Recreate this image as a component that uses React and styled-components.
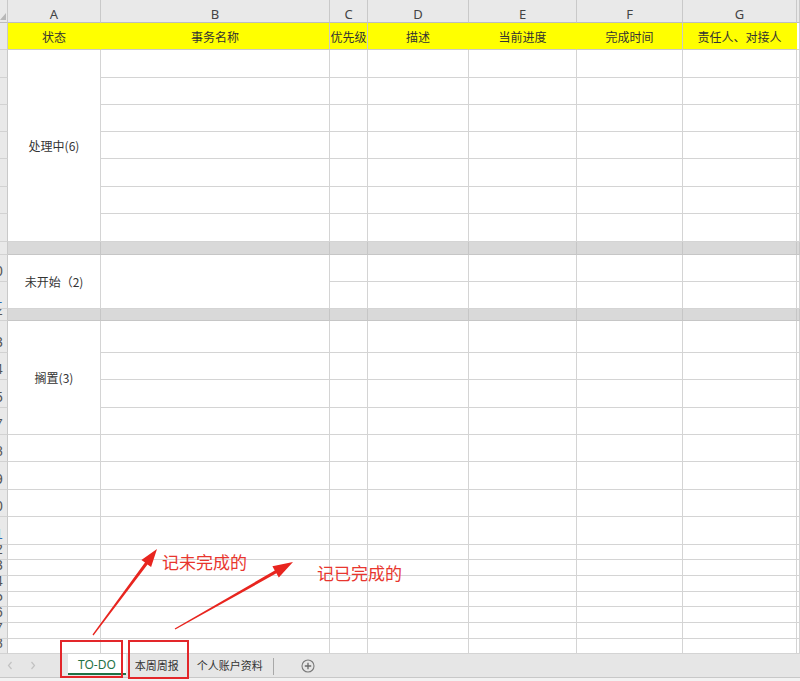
import React from "react";
import styled, { createGlobalStyle } from "styled-components";

const GlobalStyle = createGlobalStyle`
  html, body {
    margin: 0;
    padding: 0;
    background: #fff;
  }
  body {
    font-family: "Noto Sans CJK SC", "Noto Sans", sans-serif;
  }
`;

const COLS = [
  { key: "A", w: 93, title: "状态" },
  { key: "B", w: 229, title: "事务名称" },
  { key: "C", w: 38, title: "优先级" },
  { key: "D", w: 101, title: "描述" },
  { key: "E", w: 108, title: "当前进度" },
  { key: "F", w: 106, title: "完成时间" },
  { key: "G", w: 114, title: "责任人、对接人" },
];

// n = row number shown in the row header, h = height in px
const ROWS = [
  { n: 1, h: 27, head: true },
  { n: 2, h: 28 },
  { n: 3, h: 27 },
  { n: 4, h: 27 },
  { n: 5, h: 27 },
  { n: 6, h: 28 },
  { n: 7, h: 27 },
  { n: 8, h: 28 },
  { n: 9, h: 13, gray: true },
  { n: 10, h: 27 },
  { n: 11, h: 27 },
  { n: 12, h: 12, gray: true },
  { n: 13, h: 32 },
  { n: 14, h: 27 },
  { n: 15, h: 28 },
  { n: 17, h: 27 },
  { n: 18, h: 27 },
  { n: 19, h: 28 },
  { n: 20, h: 27 },
  { n: 21, h: 28 },
  { n: 22, h: 15 },
  { n: 23, h: 16 },
  { n: 24, h: 16 },
  { n: 25, h: 15 },
  { n: 26, h: 16 },
  { n: 27, h: 16 },
  { n: 28, h: 15 },
];

// merged cells, keyed by column then first row number
const MERGES = {
  A: {
    2: { span: 7, text: "处理中(6)" },
    10: { span: 2, text: "未开始（2)" },
    13: { span: 4, text: "搁置(3)" },
  },
  B: {
    10: { span: 2 },
  },
};

const HOT_ROWS = [11, 21];

const Page = styled.div`
  position: relative;
  width: 800px;
  height: 681px;
  overflow: hidden;
  background: #fff;
`;

const Grid = styled.div`
  display: grid;
  grid-template-columns: 8px ${COLS.map((c) => c.w + "px").join(" ")} 1fr;
  grid-template-rows: ${(p) => p.$rows};
  height: 654px;
`;

const Corner = styled.div`
  box-sizing: border-box;
  position: relative;
  background: #e9e9e9;
  border-right: 1px solid #c9c9c9;
  border-bottom: 1px solid #bdbdbd;
`;

const CornerMark = styled.span`
  position: absolute;
  right: 1px;
  bottom: 2px;
  width: 0;
  height: 0;
  border-left: 6px solid transparent;
  border-bottom: 7px solid #b8b8b8;
`;

const ColHead = styled.div`
  box-sizing: border-box;
  background: #e9e9e9;
  border-right: 1px solid #c9c9c9;
  border-bottom: 1px solid #bdbdbd;
  display: flex;
  align-items: center;
  justify-content: center;
  padding-top: 5px;
  font: 13px "Noto Sans", sans-serif;
  color: #444;
`;

const RowHead = styled.div`
  box-sizing: border-box;
  background: #e9e9e9;
  border-right: 1px solid #c9c9c9;
  border-bottom: 1px solid #d2d2d2;
  overflow: hidden;
  display: flex;
  justify-content: flex-end;
  align-items: flex-end;
  padding-bottom: 3px;
  color: ${(p) => (p.$hot ? "#2f6db5" : "#555")};
`;

const RowNum = styled.span`
  flex-shrink: 0;
  width: 24px;
  text-align: center;
  font: 14px "Liberation Sans", sans-serif;
  line-height: 1;
`;

const cellBg = { head: "#ffff00", gray: "#d9d9d9", plain: "#fff" };
const cellLine = { head: "#c9c9c9", gray: "#c6c6c6", plain: "#d4d4d4" };

const Cell = styled.div`
  box-sizing: border-box;
  grid-row: span ${(p) => p.$span || 1};
  background: ${(p) => cellBg[p.$kind]};
  border-right: 1px solid ${(p) => (p.$kind === "head" && !p.$edge ? "#ffff00" : cellLine[p.$kind])};
  border-bottom: 1px solid ${(p) => cellLine[p.$kind]};
  display: flex;
  align-items: center;
  justify-content: center;
  overflow: hidden;
  white-space: nowrap;
  font-size: 12px;
  color: #333;
`;

const TabBar = styled.div`
  box-sizing: border-box;
  height: 24px;
  display: flex;
  align-items: stretch;
  background: #e6e6e6;
  border-bottom: 1px solid #c8c8c8;
`;

const StatusStrip = styled.div`
  height: 3px;
  background: #f2f2f2;
`;

const NavArrows = styled.div`
  width: 68px;
  display: flex;
  align-items: center;
  gap: 17px;
  padding-left: 7px;
  box-sizing: border-box;
`;

const Tab = styled.div`
  position: relative;
  display: flex;
  align-items: center;
  padding: 0 ${(p) => (p.$active ? 10 : 9)}px 1px;
  font-size: ${(p) => (p.$active ? 12 : 11)}px;
  font-family: ${(p) => (p.$active ? '"Noto Sans", "Noto Sans CJK SC"' : '"Noto Sans CJK SC"')}, sans-serif;
  color: ${(p) => (p.$active ? "#1e7145" : "#333")};
  background: ${(p) => (p.$active ? "#fff" : "transparent")};
  box-shadow: ${(p) => (p.$active ? "inset 0 -2px 0 #1e7145" : "none")};
  margin-bottom: ${(p) => (p.$active ? 2 : 0)}px;
`;

const TabDivider = styled.span`
  width: 1px;
  margin: 4px 0 2px 1px;
  background: #a8a8a8;
`;

const AddSheet = styled.div`
  display: flex;
  align-items: center;
  margin-left: 27px;
`;

const Overlay = styled.svg`
  position: absolute;
  inset: 0;
  pointer-events: none;
`;

const Note = styled.span`
  position: absolute;
  left: ${(p) => p.$x}px;
  top: ${(p) => p.$y}px;
  font-size: 17px;
  line-height: 1;
  color: #e8362e;
  white-space: nowrap;
`;

function arrowPoints([tx, ty], [px, py], head = 18, wing = 6, tail = 0.6, neck = 1.6) {
  const len = Math.hypot(px - tx, py - ty);
  const ux = (px - tx) / len;
  const uy = (py - ty) / len;
  const nx = -uy;
  const ny = ux;
  const bx = px - ux * head;
  const by = py - uy * head;
  return [
    [tx + nx * tail, ty + ny * tail],
    [bx + nx * neck, by + ny * neck],
    [bx + nx * wing, by + ny * wing],
    [px, py],
    [bx - nx * wing, by - ny * wing],
    [bx - nx * neck, by - ny * neck],
    [tx - nx * tail, ty - ny * tail],
  ]
    .map((pt) => pt.map((v) => v.toFixed(1)).join(","))
    .join(" ");
}

function Chevron({ flip }) {
  return (
    <svg width="6" height="9" viewBox="0 0 6 9">
      <path d={flip ? "M1.5 1 L4.5 4.5 L1.5 8" : "M4.5 1 L1.5 4.5 L4.5 8"} fill="none" stroke="#c2c2c2" strokeWidth="1.2" />
    </svg>
  );
}

function Sheet() {
  const covered = new Set();
  Object.entries(MERGES).forEach(([col, merges]) => {
    Object.entries(merges).forEach(([start, { span }]) => {
      const i = ROWS.findIndex((r) => r.n === Number(start));
      for (let k = 1; k < span; k++) covered.add(col + ROWS[i + k].n);
    });
  });
  const template = ["23px", ...ROWS.map((r) => r.h + "px")].join(" ");

  return (
    <Grid $rows={template}>
      <Corner>
        <CornerMark />
      </Corner>
      {COLS.map((c) => (
        <ColHead key={c.key}>{c.key}</ColHead>
      ))}
      <ColHead />
      {ROWS.map((r) => {
        const kind = r.head ? "head" : r.gray ? "gray" : "plain";
        return (
          <React.Fragment key={r.n}>
            <RowHead $hot={HOT_ROWS.includes(r.n)}>
              <RowNum>{r.n}</RowNum>
            </RowHead>
            {COLS.map((c) => {
              if (covered.has(c.key + r.n)) return null;
              const m = MERGES[c.key]?.[r.n];
              return (
                <Cell key={c.key} $kind={kind} $span={m?.span} $edge={["B", "C", "F"].includes(c.key)}>
                  {r.head ? c.title : m?.text}
                </Cell>
              );
            })}
            <Cell $kind={kind === "head" ? "plain" : kind} />
          </React.Fragment>
        );
      })}
    </Grid>
  );
}

export default function App() {
  return (
    <Page>
      <GlobalStyle />
      <Sheet />
      <TabBar>
        <NavArrows>
          <Chevron />
          <Chevron flip />
        </NavArrows>
        <Tab $active>TO-DO</Tab>
        <Tab>本周周报</Tab>
        <Tab>个人账户资料</Tab>
        <TabDivider />
        <AddSheet>
          <svg width="14" height="14" viewBox="0 0 14 14">
            <circle cx="7" cy="7" r="6" fill="none" stroke="#7a7a7a" strokeWidth="1.1" />
            <path d="M7 3.8 V10.2 M3.8 7 H10.2" stroke="#6a6a6a" strokeWidth="1.3" />
          </svg>
        </AddSheet>
      </TabBar>
      <StatusStrip />
      <Overlay width="800" height="681" viewBox="0 0 800 681">
        <polygon points={arrowPoints([93, 635], [157, 549])} fill="#e8251f" />
        <polygon points={arrowPoints([175, 629], [293, 562], 20, 6.5)} fill="#e8251f" />
        <rect x="61" y="641" width="61" height="36" fill="none" stroke="#e3262a" strokeWidth="2" />
        <rect x="129" y="641" width="59" height="37" fill="none" stroke="#e3262a" strokeWidth="2" />
      </Overlay>
      <Note $x={162} $y={553}>记未完成的</Note>
      <Note $x={317} $y={564}>记已完成的</Note>
    </Page>
  );
}
